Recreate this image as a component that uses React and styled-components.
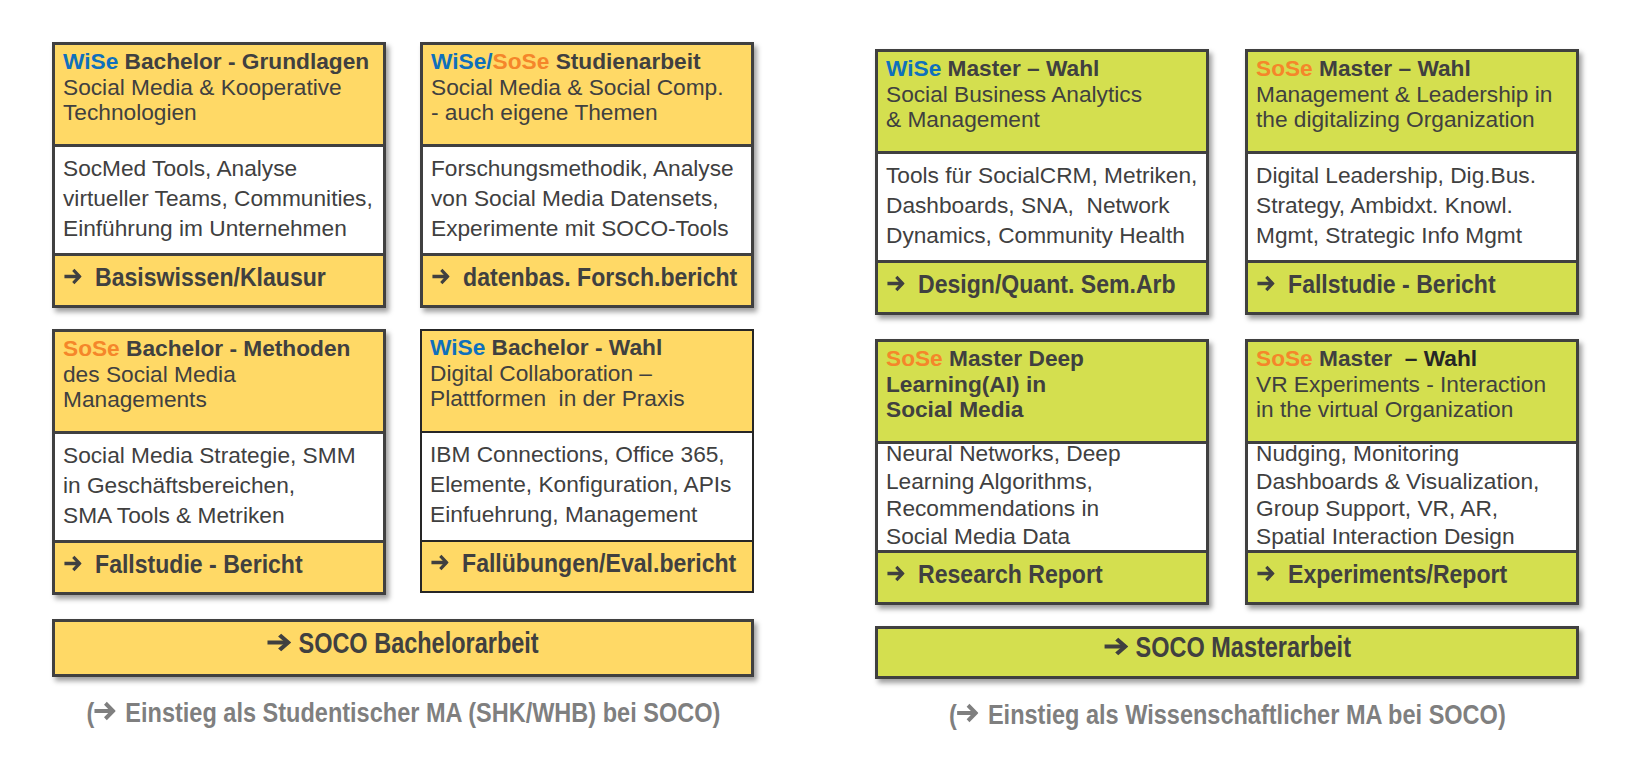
import styled, { createGlobalStyle } from 'styled-components';

const GlobalStyle = createGlobalStyle`
  html, body {
    margin: 0;
    padding: 0;
    background: #fff;
  }
  body {
    font-family: "Liberation Sans", Arial, sans-serif;
    color: #404040;
  }
`;

const YELLOW = '#FFD966';
const GREEN = '#D4DF4F';
const INK = '#404040';

const Page = styled.div`
  width: 1636px;
  height: 758px;
  display: flex;
  align-items: flex-start;
  overflow: hidden;
`;

const Group = styled.section`
  width: ${({ $width }) => $width}px;
  margin-left: ${({ $left }) => $left}px;
  margin-top: ${({ $top }) => $top}px;
  display: flex;
  flex-direction: column;
`;

const CardGrid = styled.div`
  display: grid;
  grid-template-columns: 334px 334px;
  column-gap: ${({ $colGap }) => $colGap}px;
  row-gap: ${({ $rowGap }) => $rowGap}px;
  align-items: start;
`;

const Card = styled.article`
  display: flex;
  flex-direction: column;
  background: ${({ $tone }) => $tone};
  border: ${({ $thin }) => ($thin ? '2px solid #262626' : `3px solid ${INK}`)};
  box-shadow: ${({ $thin }) => ($thin ? 'none' : '3px 4px 5px rgba(0, 0, 0, 0.38)')};
`;

const Head = styled.header`
  box-sizing: border-box;
  height: 102px;
  padding: 4px 8px 0;
  border-bottom: ${({ $thin }) => ($thin ? '2px solid #262626' : `3px solid ${INK}`)};
  font-size: 22.7px;
  line-height: 25.7px;
  white-space: pre;
  overflow: hidden;
`;

const Title = styled.div`
  font-weight: bold;
`;

const SubLine = styled.div`
  font-weight: ${({ $bold }) => ($bold ? 'bold' : 'normal')};
`;

const Term = styled.span`
  color: ${({ $kind }) => ($kind === 'wise' ? '#0F70BC' : $kind === 'sose' ? '#F5862A' : '#262626')};
`;

const Body = styled.div`
  box-sizing: border-box;
  height: 109px;
  background: #fff;
  padding: 0 8px;
  border-bottom: ${({ $thin }) => ($thin ? '2px solid #262626' : `3px solid ${INK}`)};
  font-size: 22.7px;
  line-height: ${({ $dense }) => ($dense ? '27.6px' : '30px')};
  white-space: pre;
`;

const Lines = styled.div`
  margin-top: ${({ $dense }) => ($dense ? -4 : 6)}px;
`;

const Foot = styled.footer`
  box-sizing: border-box;
  height: 49px;
  padding: 6px 9px 0;
  font-size: 26px;
  line-height: 30px;
  font-weight: bold;
  white-space: nowrap;
`;

const Squeeze = styled.span`
  display: inline-block;
  flex: none;
  white-space: pre;
  transform: scaleX(${({ $scale }) => $scale});
  transform-origin: ${({ $origin }) => $origin || 'left center'};
`;

const ArrowSvg = styled.svg`
  display: inline-block;
  width: ${({ $w }) => $w}px;
  height: ${({ $h }) => $h}px;
  margin-right: ${({ $gap }) => $gap}px;
  vertical-align: ${({ $lift }) => $lift}px;
`;

const Arrow = ({ w, h, gap, lift = 1 }) => (
  <ArrowSvg
    $w={w}
    $h={h}
    $gap={gap}
    $lift={lift}
    viewBox="0 0 20 18"
    preserveAspectRatio="none"
    fill="none"
    stroke="currentColor"
    strokeWidth="3.6"
    strokeLinejoin="miter"
  >
    <path d="M0.5 9H17.5" />
    <path d="M10.5 2L17.5 9L10.5 16" />
  </ArrowSvg>
);

const FinalBox = styled.div`
  box-sizing: border-box;
  height: ${({ $height }) => $height}px;
  margin-top: ${({ $gap }) => $gap}px;
  padding-top: ${({ $pad }) => $pad}px;
  display: flex;
  justify-content: center;
  background: ${({ $tone }) => $tone};
  border: 3px solid ${INK};
  box-shadow: 3px 4px 5px rgba(0, 0, 0, 0.38);
  font-size: 29px;
  line-height: 32px;
  font-weight: bold;
  white-space: nowrap;
`;

const Caption = styled.p`
  margin: 20px 0 0;
  display: flex;
  justify-content: center;
  font-size: 28px;
  line-height: 32px;
  font-weight: bold;
  color: #7f7f7f;
  white-space: nowrap;
`;

const bachelor = [
  {
    title: [['wise', 'WiSe'], [null, ' Bachelor - Grundlagen']],
    sub: ['Social Media & Kooperative', 'Technologien'],
    body: ['SocMed Tools, Analyse', 'virtueller Teams, Communities,', 'Einführung im Unternehmen'],
    result: 'Basiswissen/Klausur',
  },
  {
    title: [['wise', 'WiSe/'], ['sose', 'SoSe'], [null, ' Studienarbeit']],
    sub: ['Social Media & Social Comp.', '- auch eigene Themen'],
    body: ['Forschungsmethodik, Analyse', 'von Social Media Datensets,', 'Experimente mit SOCO-Tools'],
    result: 'datenbas. Forsch.bericht',
  },
  {
    title: [['sose', 'SoSe'], [null, ' Bachelor - Methoden']],
    sub: ['des Social Media', 'Managements'],
    body: ['Social Media Strategie, SMM', 'in Geschäftsbereichen,', 'SMA Tools & Metriken'],
    result: 'Fallstudie - Bericht',
  },
  {
    thin: true,
    title: [['wise', 'WiSe'], [null, ' Bachelor - Wahl']],
    sub: ['Digital Collaboration –', 'Plattformen  in der Praxis'],
    body: ['IBM Connections, Office 365,', 'Elemente, Konfiguration, APIs', 'Einfuehrung, Management'],
    result: 'Fallübungen/Eval.bericht',
  },
];

const master = [
  {
    title: [['wise', 'WiSe'], [null, ' Master – Wahl']],
    sub: ['Social Business Analytics', '& Management'],
    body: ['Tools für SocialCRM, Metriken,', 'Dashboards, SNA,  Network', 'Dynamics, Community Health'],
    result: 'Design/Quant. Sem.Arb',
  },
  {
    title: [['sose', 'SoSe'], [null, ' Master – Wahl']],
    sub: ['Management & Leadership in', 'the digitalizing Organization'],
    body: ['Digital Leadership, Dig.Bus.', 'Strategy, Ambidxt. Knowl.', 'Mgmt, Strategic Info Mgmt'],
    result: 'Fallstudie - Bericht',
  },
  {
    title: [['sose', 'SoSe'], [null, ' Master Deep']],
    sub: ['Learning(AI) in', 'Social Media'],
    boldSub: true,
    dense: true,
    body: ['Neural Networks, Deep', 'Learning Algorithms,', 'Recommendations in', 'Social Media Data'],
    result: 'Research Report',
  },
  {
    title: [['sose', 'SoSe'], [null, ' Master  '], ['dark', '– Wahl']],
    sub: ['VR Experiments - Interaction', 'in the virtual Organization'],
    dense: true,
    body: ['Nudging, Monitoring', 'Dashboards & Visualization,', 'Group Support, VR, AR,', 'Spatial Interaction Design'],
    result: 'Experiments/Report',
  },
];

const Module = ({ module, tone }) => (
  <Card $tone={tone} $thin={module.thin}>
    <Head $thin={module.thin}>
      <Title>
        {module.title.map(([kind, text], i) =>
          kind ? <Term key={i} $kind={kind}>{text}</Term> : <span key={i}>{text}</span>
        )}
      </Title>
      {module.sub.map(line => (
        <SubLine key={line} $bold={module.boldSub}>{line}</SubLine>
      ))}
    </Head>
    <Body $thin={module.thin} $dense={module.dense}>
      <Lines $dense={module.dense}>
        {module.body.map(line => (
          <div key={line}>{line}</div>
        ))}
      </Lines>
    </Body>
    <Foot>
      <Squeeze $scale={0.887}>
        <Arrow w={20} h={17} gap={15} lift={1} />
        {module.result}
      </Squeeze>
    </Foot>
  </Card>
);

const Track = ({ modules, tone, left, top, colGap, rowGap, final, finalGap, finalHeight, finalPad, caption }) => (
  <Group $width={334 * 2 + colGap} $left={left} $top={top}>
    <CardGrid $colGap={colGap} $rowGap={rowGap}>
      {modules.map(m => (
        <Module key={m.result + m.body[0]} module={m} tone={tone} />
      ))}
    </CardGrid>
    <FinalBox $tone={tone} $gap={finalGap} $height={finalHeight} $pad={finalPad}>
      <Squeeze $scale={0.81} $origin="center center">
        <Arrow w={30} h={19} gap={9} lift={1} />
        {final}
      </Squeeze>
    </FinalBox>
    <Caption>
      <Squeeze $scale={0.84} $origin="center center">
        (<Arrow w={26} h={20} gap={11} lift={1} />
        {caption}
      </Squeeze>
    </Caption>
  </Group>
);

export default function App() {
  return (
    <>
      <GlobalStyle />
      <Page>
        <Track
          modules={bachelor}
          tone={YELLOW}
          left={52}
          top={42}
          colGap={34}
          rowGap={21}
          final="SOCO Bachelorarbeit"
          finalGap={24}
          finalHeight={58}
          finalPad={5}
          caption="Einstieg als Studentischer MA (SHK/WHB) bei SOCO)"
        />
        <Track
          modules={master}
          tone={GREEN}
          left={121}
          top={49}
          colGap={36}
          rowGap={24}
          final="SOCO Masterarbeit"
          finalGap={21}
          finalHeight={53}
          finalPad={2}
          caption="Einstieg als Wissenschaftlicher MA bei SOCO)"
        />
      </Page>
    </>
  );
}
